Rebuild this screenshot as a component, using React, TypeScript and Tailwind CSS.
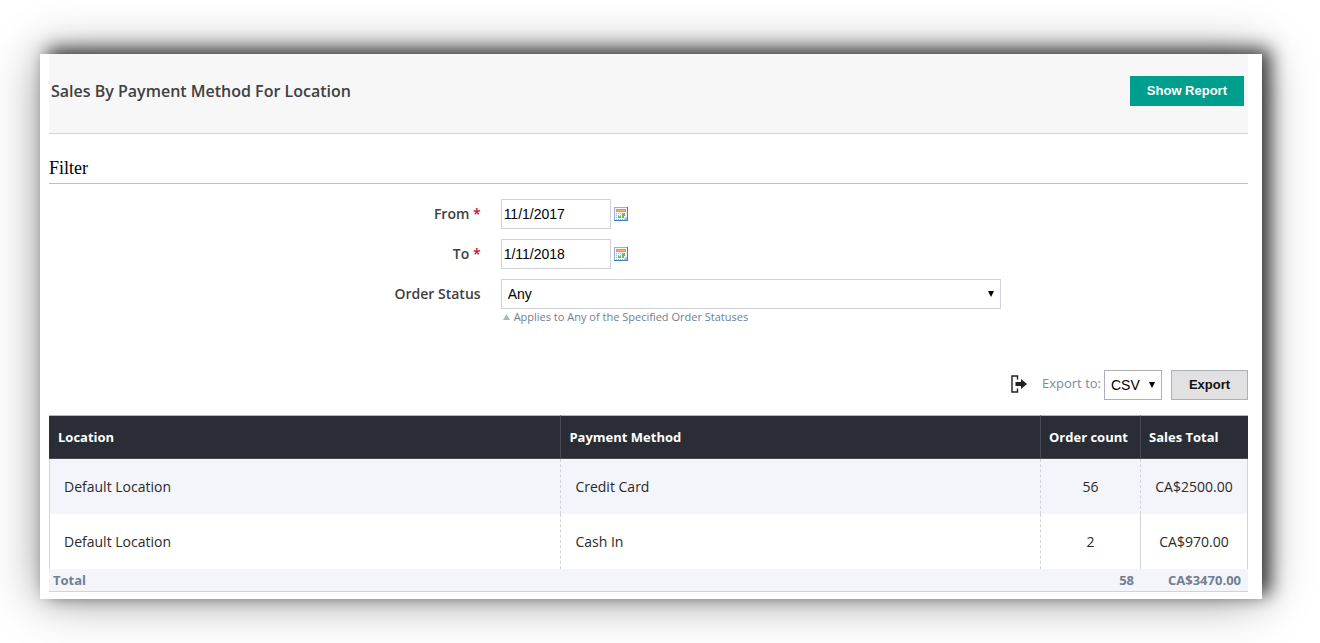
import { useState } from "react";
import type { ReactNode } from "react";

const rows = [
  { location: "Default Location", method: "Credit Card", count: 56, total: "CA$2500.00" },
  { location: "Default Location", method: "Cash In", count: 2, total: "CA$970.00" },
];

function CalendarIcon() {
  return (
    <svg width="14" height="14" viewBox="0 0 14 14" shapeRendering="crispEdges" aria-hidden="true">
      <path d="M0 0h14v14H0z" fill="#8fb1df" />
      <path d="M13 0h1v14H0v-1h13z" fill="#477dc0" />
      <path d="M1 1h12v12H1z" fill="#f1f5fc" />
      <path d="M2 2h10v3H2z" fill="#f58b4c" />
      <path d="M3 3h8v1H3z" fill="#ffab73" />
      <path
        d="M2 6h1v1H2zM4 6h1v1H4zM6 6h1v1H6zM2 8h1v1H2zM4 8h1v1H4zM6 8h1v1H6zM2 10h1v1H2zM2 12h1v1H2zM4 12h1v1H4zM6 12h1v1H6zM8 12h1v1H8z"
        fill="#a3b5d2"
      />
      <path d="M8 6h3v3H8zM4 9h3v2H4zM8 9h2v2H8z" fill="#70b565" />
      <path d="M9 6h1v1H9zM5 9h1v1H5z" fill="#9bcf90" />
      <path d="M10 10h3v3h-3z" fill="#d5e3f7" />
      <path d="M12 10h1v3h-3v-1h1v-1h1z" fill="#9fc0ea" />
    </svg>
  );
}

function ExportIcon() {
  return (
    <svg width="16" height="18" viewBox="0 0 16 18" fill="none" aria-hidden="true">
      <path d="M6.500 4.500V1H1v16h5.500v-3.500" stroke="#231f20" strokeWidth="1.4" />
      <path d="M4.500 7H10V4l6 5-6 5v-3H4.500z" fill="#231f20" />
    </svg>
  );
}

function SelectArrow() {
  return (
    <svg
      width="6"
      height="6"
      viewBox="0 0 6 6"
      aria-hidden="true"
      className="pointer-events-none absolute top-3 right-[7px]"
    >
      <path d="M0 0h6L3 6z" fill="#000" />
    </svg>
  );
}

function FormRow({ id, label, required, children }: { id: string; label: string; required?: boolean; children: ReactNode }) {
  return (
    <div className="flex gap-5">
      <label htmlFor={id} className="w-[36%] shrink-0 text-right text-sm leading-[30px] font-semibold text-[#404040]">
        {label}
        {required && <span className="text-[#c8102e]"> *</span>}
      </label>
      <div className="min-w-0 flex-1">{children}</div>
    </div>
  );
}

function DateField({ id, label, initial }: { id: string; label: string; initial: string }) {
  const [value, setValue] = useState(initial);
  return (
    <FormRow id={id} label={label} required>
      <div className="flex items-center gap-[3px]">
        <input
          id={id}
          type="text"
          value={value}
          onChange={(e) => setValue(e.target.value)}
          className="h-[30px] w-[110px] border border-[#d0d2dc] bg-white px-[2px] font-['Liberation_Sans',sans-serif] text-sm text-black"
        />
        <button type="button" aria-label={`Choose ${label} date`}>
          <CalendarIcon />
        </button>
      </div>
    </FormRow>
  );
}

export default function App() {
  return (
    <main className="pt-[54px] pr-[58px] pb-11 pl-10 font-['Open_Sans',sans-serif]">
      <section className="bg-white pr-[14px] pb-[7px] pl-[9px] shadow-[8px_-5px_17px_rgba(0,0,0,0.72),0_0_46px_rgba(0,0,0,0.4)]">
        <header className="flex h-20 items-center justify-between border-b border-[#d0d2dc] bg-[#f7f7f7] pr-1 pb-[5px] pl-[2px]">
          <h1 className="text-base font-semibold text-[#404040]">Sales By Payment Method For Location</h1>
          <button
            type="button"
            className="h-[30px] bg-[#009e8c] px-[17px] font-['Liberation_Sans',sans-serif] text-[13px] font-bold text-white"
          >
            Show Report
          </button>
        </header>

        <form onSubmit={(e) => e.preventDefault()}>
          <h2 className="mt-[22px] border-b border-[#c0c0c0] pb-[3px] font-['Liberation_Serif',serif] text-lg leading-6 text-black">
            Filter
          </h2>
          <div className="mt-[15px] flex flex-col gap-[10px]">
            <DateField id="from" label="From" initial="11/1/2017" />
            <DateField id="to" label="To" initial="1/11/2018" />
            <FormRow id="status" label="Order Status">
              <div className="relative max-w-[500px]">
                <select
                  id="status"
                  className="block h-[30px] w-full appearance-none border border-[#d0d2dc] bg-white px-[6px] font-['Liberation_Sans',sans-serif] text-sm text-black"
                >
                  <option>Any</option>
                </select>
                <SelectArrow />
              </div>
              <p className="flex items-center gap-1 pl-[2px] text-[11px] leading-4 text-[#708090]">
                <svg width="7" height="6" viewBox="0 0 7 6" aria-hidden="true">
                  <path d="M3.500 0L7 6H0z" fill="#a9b7bd" />
                </svg>
                Applies to Any of the Specified Order Statuses
              </p>
            </FormRow>
          </div>

          <div className="mt-[45px] flex items-center justify-end">
            <div className="flex items-center pb-[2px]">
              <ExportIcon />
              <label htmlFor="format" className="mr-[3px] ml-[15px] text-[13px] text-[#7b8a98]">
                Export to:
              </label>
            </div>
            <div className="relative mr-[9px]">
              <select
                id="format"
                className="block h-[30px] w-[58px] appearance-none border border-[#adb0ba] bg-white px-[6px] font-['Liberation_Sans',sans-serif] text-sm text-black"
              >
                <option>CSV</option>
              </select>
              <SelectArrow />
            </div>
            <button
              type="button"
              className="h-[30px] w-[77px] border border-[#adb0ba] bg-[#e1e1e1] font-['Liberation_Sans',sans-serif] text-[13px] font-bold text-[#111]"
            >
              Export
            </button>
          </div>
        </form>

        <table className="mt-[15px] w-full table-fixed border-separate border-spacing-0 text-sm text-[#2a2a2a]">
          <colgroup>
            <col />
            <col className="w-[40%]" />
            <col className="w-[100px]" />
            <col className="w-[108px]" />
          </colgroup>
          <thead>
            <tr className="h-11 bg-[#2a2d36] text-left text-[13px] text-white">
              <th className="border-y border-t-[#aeb9bd] border-b-[#454954] px-[9px]">Location</th>
              <th className="border-y border-l border-t-[#aeb9bd] border-b-[#454954] border-l-[#454954] px-2">Payment Method</th>
              <th className="border-y border-l border-t-[#aeb9bd] border-b-[#454954] border-l-[#454954] px-2">Order count</th>
              <th className="border-y border-l border-t-[#aeb9bd] border-b-[#454954] border-l-[#454954] px-2">Sales Total</th>
            </tr>
          </thead>
          <tbody>
            {rows.map((row) => (
              <tr key={row.method} className="group h-[55px] odd:bg-[#f4f5fb]">
                <td className="border-l border-[#d0d2dc] px-[14px]">{row.location}</td>
                <td className="border-l border-dashed border-[#d0d2dc] px-[14px]">{row.method}</td>
                <td className="border-l border-dashed border-[#d0d2dc] text-center">{row.count}</td>
                <td className="border-x border-[#d0d2dc] text-center group-odd:[border-left-style:dashed]">
                  {row.total}
                </td>
              </tr>
            ))}
          </tbody>
          <tfoot>
            <tr className="h-[23px] bg-[#f4f5fb] text-[13px] leading-[22px] font-bold text-[#708090]">
              <td className="border-b border-[#d0d2dc] pl-1">Total</td>
              <td className="border-b border-[#d0d2dc]" />
              <td className="border-b border-[#d0d2dc] pr-[6px] text-right">58</td>
              <td className="border-b border-[#d0d2dc] pr-[7px] text-right">CA$3470.00</td>
            </tr>
          </tfoot>
        </table>
      </section>
    </main>
  );
}
